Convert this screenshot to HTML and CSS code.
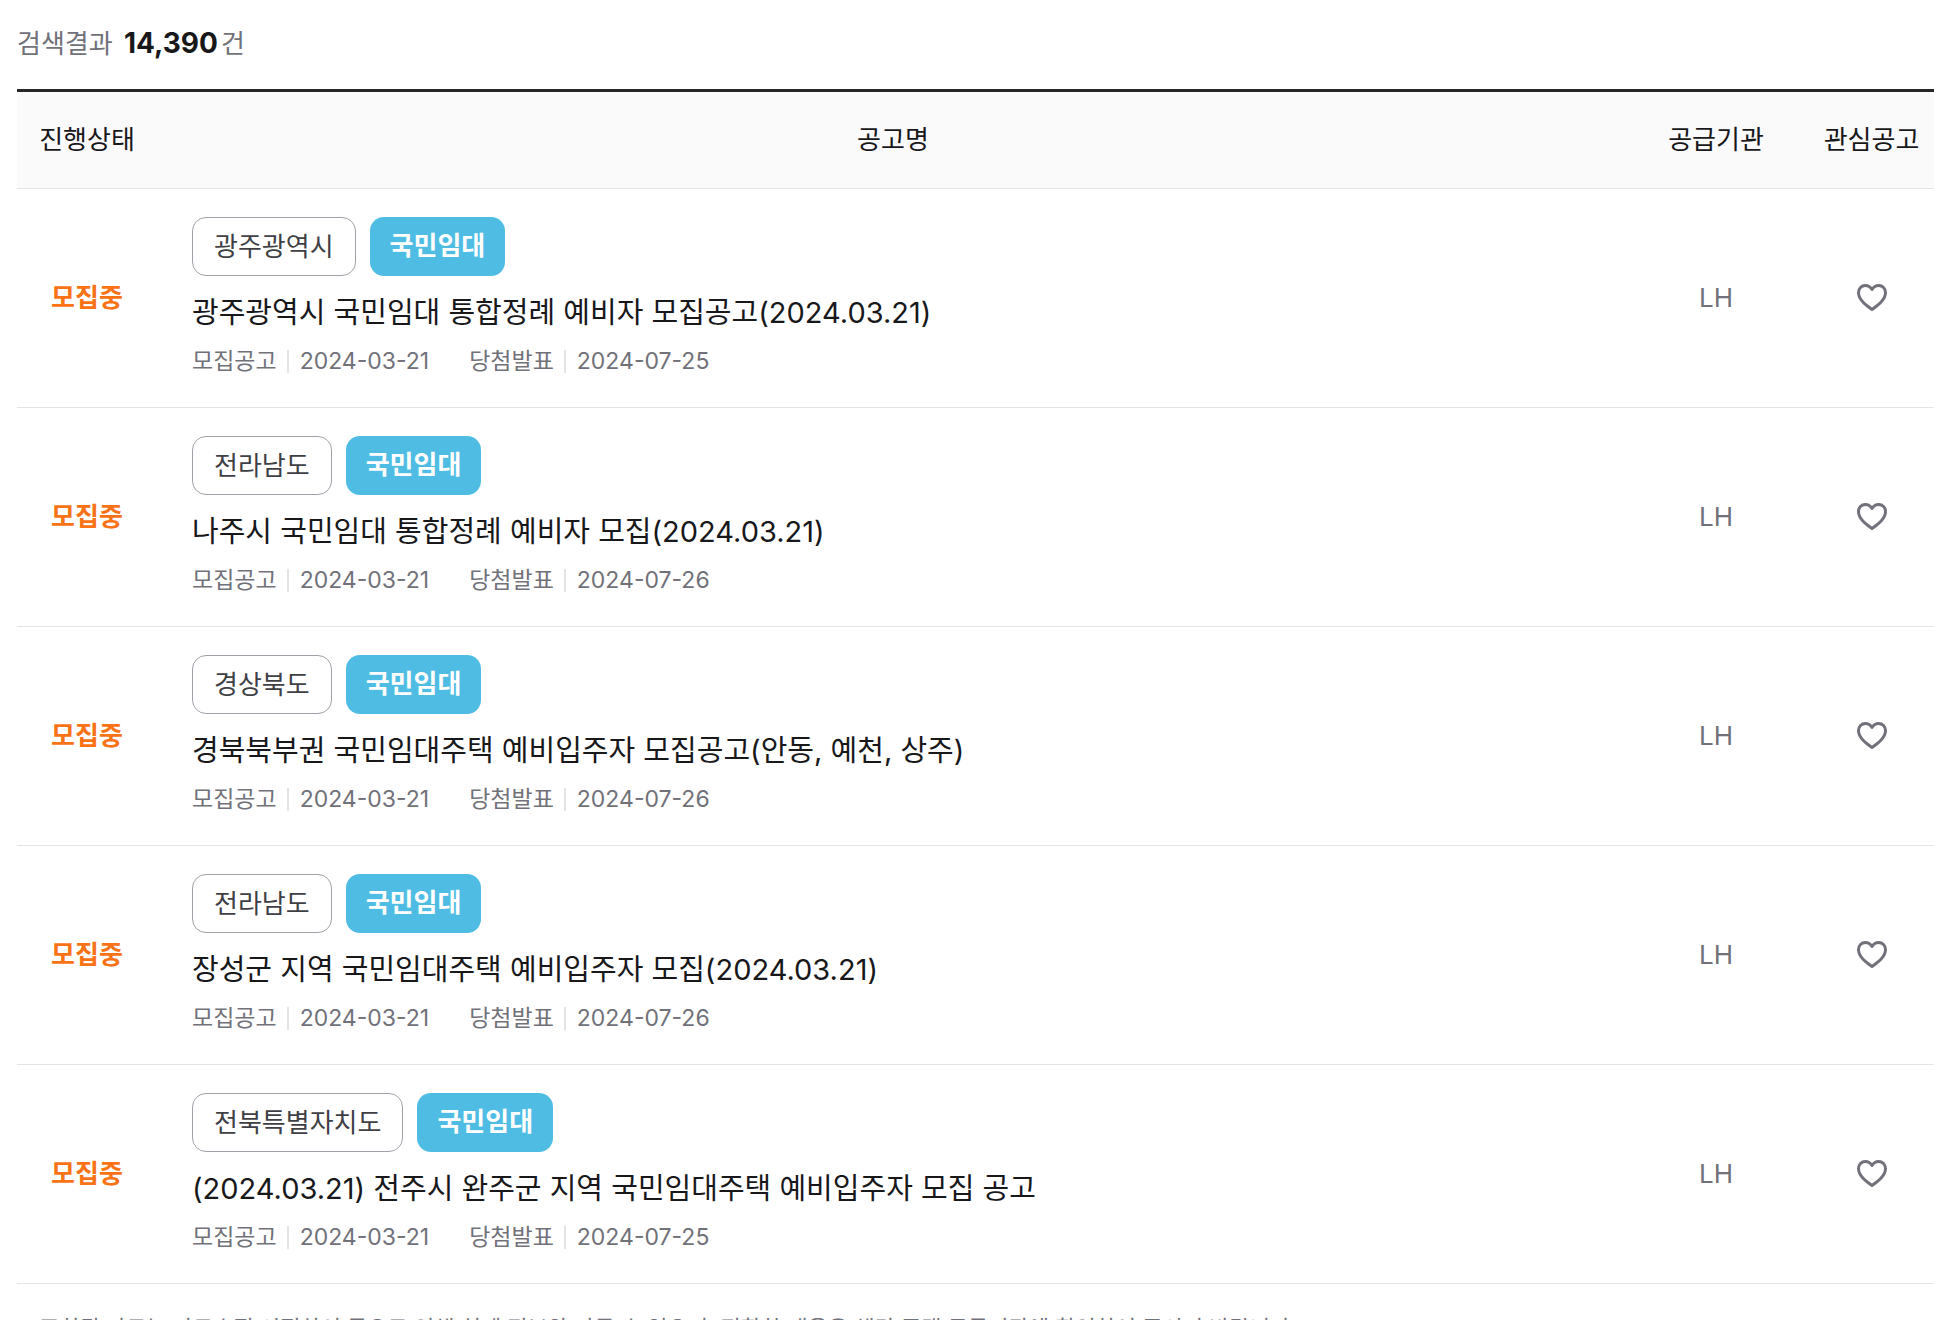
FILE: index.html
```html
<!DOCTYPE html>
<html lang="ko">
<head>
<meta charset="utf-8">
<meta name="viewport" content="width=device-width, initial-scale=1">
<title>모집공고 검색결과</title>
<link rel="stylesheet" href="styles.css">
</head>
<body>
<svg class="sprite" aria-hidden="true">
  <symbol id="heart" viewBox="0 0 32 30">
    <path d="M16 26.5C10.500 22.500 2.500 17 2.500 9.500C2.500 5.500 5.500 2.500 9.300 2.500C12 2.500 14.500 4 16 6.500C17.500 4 20 2.500 22.700 2.500C26.500 2.500 29.500 5.500 29.500 9.500C29.500 17 21.500 22.500 16 26.500Z"/>
  </symbol>
</svg>
<main class="results">
  <p class="summary">검색결과 <strong class="count">14,390</strong>건</p>
  <table class="notices">
    <colgroup><col class="col-status"><col><col class="col-agency"><col class="col-like"></colgroup>
    <thead>
      <tr><th scope="col">진행상태</th><th scope="col">공고명</th><th scope="col">공급기관</th><th scope="col" class="like">관심공고</th></tr>
    </thead>
    <tbody>
      <tr>
        <td class="status">모집중</td>
        <td class="notice">
          <div class="tags"><span class="tag region">광주광역시</span><span class="tag kind">국민임대</span></div>
          <a class="title" href="#">광주광역시 국민임대 통합정례 예비자 모집공고(2024.03.21)</a>
          <dl class="dates"><div><dt>모집공고</dt><dd>2024-03-21</dd></div><div><dt>당첨발표</dt><dd>2024-07-25</dd></div></dl>
        </td>
        <td class="agency">LH</td>
        <td class="like"><button type="button" aria-label="관심공고 등록"><svg><use href="#heart"/></svg></button></td>
      </tr>
      <tr>
        <td class="status">모집중</td>
        <td class="notice">
          <div class="tags"><span class="tag region">전라남도</span><span class="tag kind">국민임대</span></div>
          <a class="title" href="#">나주시 국민임대 통합정례 예비자 모집(2024.03.21)</a>
          <dl class="dates"><div><dt>모집공고</dt><dd>2024-03-21</dd></div><div><dt>당첨발표</dt><dd>2024-07-26</dd></div></dl>
        </td>
        <td class="agency">LH</td>
        <td class="like"><button type="button" aria-label="관심공고 등록"><svg><use href="#heart"/></svg></button></td>
      </tr>
      <tr>
        <td class="status">모집중</td>
        <td class="notice">
          <div class="tags"><span class="tag region">경상북도</span><span class="tag kind">국민임대</span></div>
          <a class="title" href="#">경북북부권 국민임대주택 예비입주자 모집공고(안동, 예천, 상주)</a>
          <dl class="dates"><div><dt>모집공고</dt><dd>2024-03-21</dd></div><div><dt>당첨발표</dt><dd>2024-07-26</dd></div></dl>
        </td>
        <td class="agency">LH</td>
        <td class="like"><button type="button" aria-label="관심공고 등록"><svg><use href="#heart"/></svg></button></td>
      </tr>
      <tr>
        <td class="status">모집중</td>
        <td class="notice">
          <div class="tags"><span class="tag region">전라남도</span><span class="tag kind">국민임대</span></div>
          <a class="title" href="#">장성군 지역 국민임대주택 예비입주자 모집(2024.03.21)</a>
          <dl class="dates"><div><dt>모집공고</dt><dd>2024-03-21</dd></div><div><dt>당첨발표</dt><dd>2024-07-26</dd></div></dl>
        </td>
        <td class="agency">LH</td>
        <td class="like"><button type="button" aria-label="관심공고 등록"><svg><use href="#heart"/></svg></button></td>
      </tr>
      <tr>
        <td class="status">모집중</td>
        <td class="notice">
          <div class="tags"><span class="tag region">전북특별자치도</span><span class="tag kind">국민임대</span></div>
          <a class="title" href="#">(2024.03.21) 전주시 완주군 지역 국민임대주택 예비입주자 모집 공고</a>
          <dl class="dates"><div><dt>모집공고</dt><dd>2024-03-21</dd></div><div><dt>당첨발표</dt><dd>2024-07-25</dd></div></dl>
        </td>
        <td class="agency">LH</td>
        <td class="like"><button type="button" aria-label="관심공고 등록"><svg><use href="#heart"/></svg></button></td>
      </tr>
    </tbody>
  </table>
  <p class="footnote">조회된 자료는 자료수집 시점차이 등으로 인해 실제 정보와 다를 수 있으며, 정확한 내용은 해당 주택 공급기관에 확인하여 주시기 바랍니다.</p>
</main>
</body>
</html>
```

FILE: styles.css
```css
* { box-sizing: border-box; }

html { overflow: hidden auto; scrollbar-width: none; }

body {
  margin: 0;
  background: #fff;
  color: #18181b;
  font-family: Inter, "Noto Sans CJK KR", sans-serif;
  font-size: 26px;
  line-height: 40px;
}

.sprite { display: none; }

.results { padding: 23px 0 0 17px; }

.summary {
  margin: 0 0 25px;
  color: #71717a;
}

.count {
  margin: 0 3px 0 4px;
  color: #18181b;
  font-size: 28px;
  font-weight: 700;
}

.notices {
  width: 100%;
  table-layout: fixed;
  border-collapse: separate;
  border-spacing: 0;
  border-top: 3px solid #27272a;
}

.col-status { width: 140px; }
.col-agency { width: 174px; }
.col-like { width: 131px; }

th {
  height: 97px;
  padding: 0;
  background: #fafafa;
  border-bottom: 1px solid #e4e4e7;
  font-weight: 400;
}

td {
  height: 219px;
  padding: 0;
  border-bottom: 1px solid #e4e4e7;
  text-align: center;
}

.status { color: #f97316; font-weight: 700; }
.agency { color: #71717a; }
.notices .like { padding-left: 6px; }

.notices .notice {
  padding: 28px 0 0 35px;
  text-align: left;
  vertical-align: top;
}

.tags { display: flex; gap: 14px; }

.tag {
  height: 59px;
  padding: 0 20px;
  border-radius: 14px;
  line-height: 57px;
}

.region { padding: 0 21px; border: 1px solid #a1a1aa; color: #3f3f46; }
.kind { background: #4fbde3; color: #fff; font-weight: 700; }

.title {
  display: block;
  margin-top: 14px;
  color: #18181b;
  font-size: 29px;
  line-height: 46px;
  text-decoration: none;
}

.dates {
  display: flex;
  gap: 40px;
  margin: 9px 0 0;
  color: #71717a;
  font-size: 23px;
  line-height: 32px;
}

.dates div { display: flex; align-items: center; }

.dates dd {
  display: flex;
  align-items: center;
  gap: 11px;
  margin: 0 0 0 10px;
}

.dates dd::before {
  width: 2px;
  height: 23px;
  background: #e4e4e7;
  content: "";
}

.like button {
  padding: 0 0 4px;
  border: 0;
  background: none;
  vertical-align: middle;
  cursor: pointer;
}

.like svg {
  display: block;
  width: 32px;
  height: 30px;
  fill: none;
  stroke: #71717a;
  stroke-width: 3;
  stroke-linejoin: round;
}

.footnote {
  margin: 24px 0 0 22px;
  color: #71717a;
  font-size: 22px;
}
```
